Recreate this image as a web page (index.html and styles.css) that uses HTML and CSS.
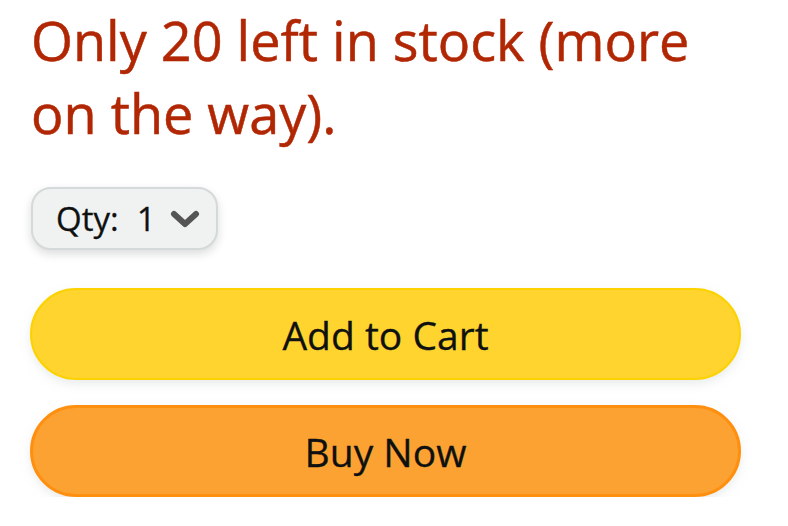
FILE: index.html
```html
<!DOCTYPE html>
<html>
<head>
<meta charset="utf-8">
<link rel="stylesheet" href="styles.css">
</head>
<body>
<div class="buybox">
  <p class="stock">Only 20 left in stock (more on the way).</p>
  <div class="qty">
    <span class="qty-label">Qty:</span>
    <span class="qty-value">1</span>
    <svg class="chev" width="30" height="20" viewBox="0 0 30 20"><path d="M4 5 L15 15 L26 5" fill="none" stroke="#555" stroke-width="6" stroke-linecap="round" stroke-linejoin="round"/></svg>
  </div>
  <button class="btn btn-cart">Add to Cart</button>
  <button class="btn btn-buy">Buy Now</button>
</div>
</body>
</html>
```
FILE: styles.css
```css
html, body {
  margin: 0;
  padding: 0;
  background: #fff;
}
.buybox {
  padding: 4px 47px 0 30px;
  display: flex;
  flex-direction: column;
  font-family: "Open Sans", "Noto Sans", sans-serif;
}
.stock {
  margin: 0 0 0 1px;
  color: #b12704;
  font-size: 54px;
  line-height: 73px;
  -webkit-text-stroke: 0.5px #b12704;
}
.qty {
  margin-top: 37px;
  align-self: flex-start;
  display: flex;
  align-items: center;
  height: 63px;
  box-sizing: border-box;
  padding: 0 16px 0 23px;
  margin-left: 1px;
  background: #f0f2f2;
  border: 2px solid #d5d9d9;
  border-radius: 20px;
  box-shadow: 0 4px 10px rgba(15,17,17,0.15);
  font-size: 33px;
  color: #0f1111;
  -webkit-text-stroke: 0.3px #0f1111;
}
.qty-label { margin-right: 18px; }
.qty-value { margin-right: 14px; }
.chev { display: block; }
.btn {
  display: block;
  width: 100%;
  height: 92px;
  border-radius: 46px;
  font-family: inherit;
  font-size: 39px;
  color: #0f1111;
  -webkit-text-stroke: 0.3px #0f1111;
  box-shadow: 0 4px 10px rgba(213,217,217,0.5);
  padding: 0;
}
.btn-cart {
  margin-top: 38px;
  background: #ffd42f;
  border: 2px solid #fcd200;
}
.btn-buy {
  margin-top: 25px;
  background: #fca232;
  border: 3px solid #ff8f0e;
}
```
